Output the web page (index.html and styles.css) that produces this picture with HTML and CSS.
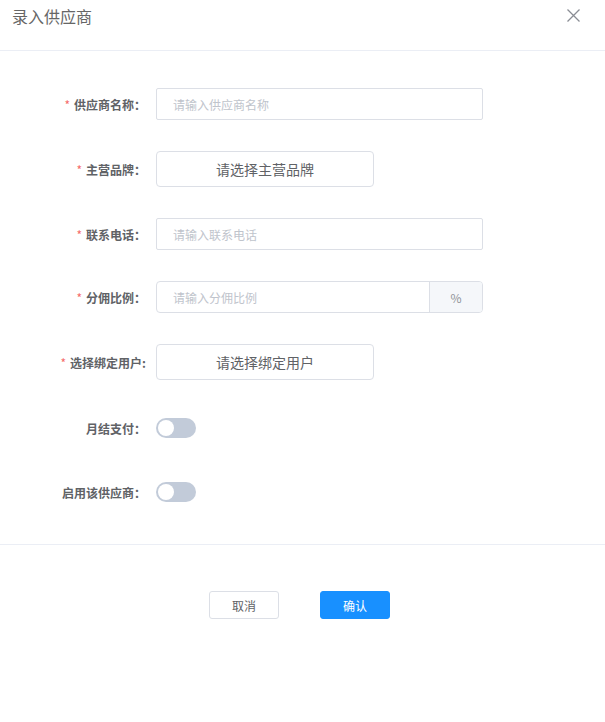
FILE: index.html
```html
<!DOCTYPE html>
<html lang="zh-CN">
<head>
<meta charset="utf-8">
<title>录入供应商</title>
<link rel="stylesheet" href="styles.css">
</head>
<body>
<div class="dialog">
  <div class="header">
    <span class="title">录入供应商</span>
    <span class="close" aria-label="关闭">
      <svg width="13" height="13" viewBox="0 0 13 13"><path d="M0.5 0.5 L12.5 12.5 M12.5 0.5 L0.5 12.5" stroke="#8a8d94" stroke-width="1.3" fill="none"/></svg>
    </span>
  </div>
  <form class="form">
    <div class="item h32">
      <label class="label"><span class="req">*</span>供应商名称：</label>
      <div class="input"><span class="ph">请输入供应商名称</span></div>
    </div>
    <div class="item h36">
      <label class="label"><span class="req">*</span>主营品牌：</label>
      <div class="select-btn">请选择主营品牌</div>
    </div>
    <div class="item h32">
      <label class="label"><span class="req">*</span>联系电话：</label>
      <div class="input"><span class="ph">请输入联系电话</span></div>
    </div>
    <div class="item h32">
      <label class="label"><span class="req">*</span>分佣比例：</label>
      <div class="input group"><span class="ph">请输入分佣比例</span><span class="append">%</span></div>
    </div>
    <div class="item h36">
      <label class="label"><span class="req">*</span>选择绑定用户:</label>
      <div class="select-btn">请选择绑定用户</div>
    </div>
    <div class="item h34">
      <label class="label">月结支付：</label>
      <span class="switch"><span class="knob"></span></span>
    </div>
    <div class="item h32">
      <label class="label">启用该供应商：</label>
      <span class="switch"><span class="knob"></span></span>
    </div>
  </form>
  <div class="footer">
    <button type="button" class="btn">取消</button>
    <button type="button" class="btn primary">确认</button>
  </div>
</div>
</body>
</html>
```
FILE: styles.css
```css
html, body {
  margin: 0;
  padding: 0;
  background: #fff;
}
body {
  font-family: "Noto Sans CJK SC", "Noto Sans", "Liberation Sans", sans-serif;
  color: #606266;
}
.dialog {
  width: 605px;
  height: 722px;
}
.header {
  height: 51px;
  border-bottom: 1px solid #ebeef5;
  display: flex;
  align-items: flex-start;
  justify-content: space-between;
  padding: 0 25px 0 12px;
  box-sizing: border-box;
}
.title {
  font-size: 16px;
  line-height: 20px;
  margin-top: 6px;
  color: #666;
}
.close {
  margin-top: 9px;
  width: 13px;
  height: 13px;
  display: block;
}
.close svg { display: block; }
.form {
  display: flex;
  flex-direction: column;
  gap: 31px;
  padding: 37px 0 0 0;
  height: 494px;
  box-sizing: border-box;
  border-bottom: 1px solid #ebeef5;
}
.item {
  display: flex;
  align-items: center;
}
.h32 { height: 32px; }
.h34 { height: 34px; }
.h36 { height: 36px; }
.label {
  width: 146px;
  text-align: right;
  font-size: 12px;
  font-weight: bold;
  color: #606266;
  margin-right: 10px;
  white-space: nowrap;
}
.req {
  color: #f56c6c;
  margin-right: 4px;
  font-weight: normal;
}
.input {
  width: 327px;
  height: 32px;
  box-sizing: border-box;
  border: 1px solid #dcdfe6;
  border-radius: 2px;
  display: flex;
  align-items: center;
  padding-left: 16px;
  font-size: 12px;
}
.ph { color: #c0c4cc; flex: 1; }
.group {
  padding-right: 0;
  border-radius: 4px;
  overflow: hidden;
}
.append {
  width: 52px;
  height: 100%;
  background: #f5f7fa;
  border-left: 1px solid #dcdfe6;
  color: #909399;
  display: flex;
  align-items: center;
  justify-content: center;
  font-size: 12px;
}
.select-btn {
  width: 218px;
  height: 36px;
  box-sizing: border-box;
  border: 1px solid #dcdfe6;
  border-radius: 4px;
  display: flex;
  align-items: center;
  justify-content: center;
  font-size: 14px;
  color: #606266;
}
.switch {
  position: relative;
  width: 40px;
  height: 20px;
  border-radius: 10px;
  background: #c2cbd9;
  display: block;
}
.knob {
  position: absolute;
  left: 2px;
  top: 2px;
  width: 16px;
  height: 16px;
  border-radius: 50%;
  background: #fff;
}
.footer {
  display: flex;
  justify-content: center;
  gap: 41px;
  padding: 46px 6px 0 0;
}
.btn {
  width: 70px;
  height: 28px;
  font-family: inherit;
  font-size: 12px;
  border: 1px solid #dcdfe6;
  border-radius: 3px;
  background: #fff;
  color: #606266;
  padding: 0;
  cursor: pointer;
}
.btn.primary {
  background: #1890ff;
  border-color: #1890ff;
  color: #fff;
}
```
